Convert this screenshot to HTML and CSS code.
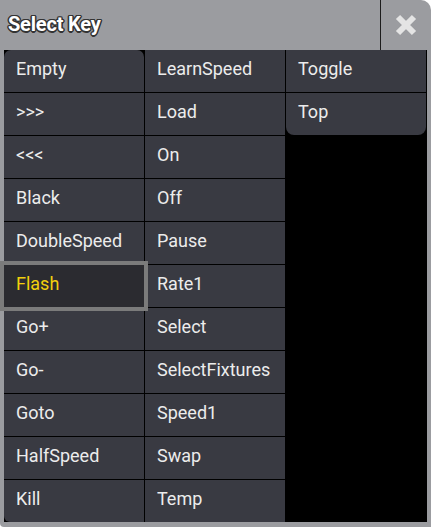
FILE: index.html
```html
<!DOCTYPE html>
<html>
<head>
<meta charset="utf-8">
<link rel="stylesheet" href="styles.css">
</head>
<body>
<div class="window">
  <div class="titlebar">
    <div class="title">Select Key</div>
    <div class="close">
      <svg width="22" height="22" viewBox="0 0 22 22">
        <path d="M3 3 L19 19 M19 3 L3 19" stroke="#e4e4e4" stroke-width="6" stroke-linecap="butt"/>
      </svg>
    </div>
  </div>
  <div class="grid">
    <div class="cell first">Empty</div>
    <div class="cell">&gt;&gt;&gt;</div>
    <div class="cell">&lt;&lt;&lt;</div>
    <div class="cell">Black</div>
    <div class="cell">DoubleSpeed</div>
    <div class="cell selected">Flash</div>
    <div class="cell">Go+</div>
    <div class="cell">Go-</div>
    <div class="cell">Goto</div>
    <div class="cell">HalfSpeed</div>
    <div class="cell last-left">Kill</div>
    <div class="cell">LearnSpeed</div>
    <div class="cell">Load</div>
    <div class="cell">On</div>
    <div class="cell">Off</div>
    <div class="cell">Pause</div>
    <div class="cell">Rate1</div>
    <div class="cell">Select</div>
    <div class="cell">SelectFixtures</div>
    <div class="cell">Speed1</div>
    <div class="cell">Swap</div>
    <div class="cell">Temp</div>
    <div class="cell">Toggle</div>
    <div class="cell bottom-round">Top</div>
  </div>
</div>
</body>
</html>
```

FILE: styles.css
```css
html, body {
  margin: 0;
  padding: 0;
  background: #ffffff;
}
body {
  font-family: Roboto, "Liberation Sans", sans-serif;
}
.window {
  width: 431px;
  height: 527px;
  background: #9b9ca0;
  border-top-right-radius: 10px;
  border-bottom-left-radius: 4px;
  display: flex;
  flex-direction: column;
  overflow: hidden;
}
.titlebar {
  height: 50px;
  display: flex;
  align-items: stretch;
  flex: none;
}
.title {
  flex: 1;
  display: flex;
  align-items: center;
  padding-left: 8px;
  padding-bottom: 3px;
  font-size: 20px;
  font-weight: bold;
  color: #ffffff;
  letter-spacing: -0.2px;
  text-shadow: -1px -1px 0 #333, 1px -1px 0 #333, -1px 1px 0 #333, 1px 1px 0 #333,
    0 -1.5px 0 #333, 0 1.5px 0 #333, -1.5px 0 0 #333, 1.5px 0 0 #333;
}
.close {
  width: 50px;
  border-left: 1px solid #1c1c1c;
  display: flex;
  align-items: center;
  justify-content: center;
}
.grid {
  margin-left: 4px;
  width: 423px;
  height: 472px;
  background: #000000;
  display: grid;
  grid-template-columns: 140px 140px 140px;
  grid-template-rows: repeat(11, 42px);
  grid-auto-flow: column;
  column-gap: 1px;
  row-gap: 1px;
  align-content: start;
}
.cell {
  background: #393a42;
  color: #ececec;
  font-size: 18px;
  display: flex;
  align-items: center;
  padding-left: 12px;
  padding-bottom: 5px;
}
.cell.first {
  border-top-left-radius: 7px;
  border-top-right-radius: 7px;
}
.cell.last-left {
  border-bottom-left-radius: 6px;
}
.cell.bottom-round {
  border-bottom-left-radius: 8px;
  border-bottom-right-radius: 8px;
}
.cell.selected {
  background: #2b2b30;
  color: #f2cf0d;
  outline: 4px solid #7b7b7b;
  position: relative;
  z-index: 1;
}
```
